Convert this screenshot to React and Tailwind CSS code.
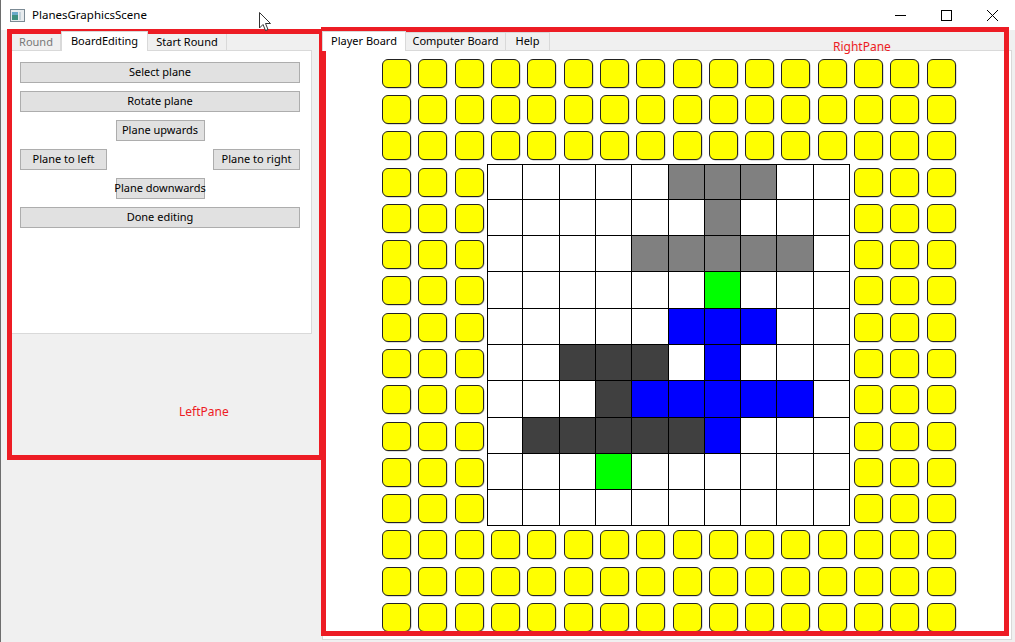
import React from "react";

const BOARD = [
  ".....ggg..",
  "......g...",
  "....ggggg.",
  "......G...",
  ".....bbb..",
  "..ddd.b...",
  "...dbbbbb.",
  ".dddddb...",
  "...G......",
  "..........",
];

const fillFor = {
  ".": "bg-white",
  g: "bg-[#808080]",
  d: "bg-[#404040]",
  b: "bg-[#0000ff]",
  G: "bg-[#00ff00]",
};

function Btn({ text, className = "" }) {
  return (
    <div
      className={`h-[21px] flex items-center justify-center whitespace-nowrap bg-[#e1e1e1] border border-[#adadad] text-[11px] text-black ${className}`}
    >
      {text}
    </div>
  );
}

function Cell({ r, c }) {
  const inBoard = r >= 3 && r <= 12 && c >= 3 && c <= 12;
  if (!inBoard) {
    return (
      <div className="w-[36.3px] h-[36.3px] pl-[4px] pt-[4px]">
        <div className="w-[29px] h-[29px] rounded-[6px] bg-[#ffff00] border-[1.5px] border-[#222222] shadow-[0.5px_0.5px_0_#b8b8b8]" />
      </div>
    );
  }
  const br = r - 3;
  const bc = c - 3;
  const kind = BOARD[br][bc];
  return (
    <div
      className={`w-[36.3px] h-[36.3px] border-r border-b border-black ${
        br === 0 ? "border-t" : ""
      } ${bc === 0 ? "border-l" : ""} ${fillFor[kind]}`}
    />
  );
}

export default function App() {
  const cells = [];
  for (let r = 0; r < 16; r++) {
    for (let c = 0; c < 16; c++) {
      cells.push(<Cell key={`${r}-${c}`} r={r} c={c} />);
    }
  }

  return (
    <div className="relative w-[1015px] h-[642px] overflow-hidden bg-[#f0f0f0] border-l border-[#6d6d6d] font-['Noto_Sans','Liberation_Sans',sans-serif] text-black">
      {/* title bar */}
      <div className="h-[30px] bg-white flex items-center">
        <svg width="15" height="13" viewBox="0 0 15 13" className="ml-[9px]">
          <rect x="0.5" y="0.5" width="14" height="12" fill="#e8ecef" stroke="#7b8a94" />
          <rect x="2" y="3" width="6" height="8" fill="#3e8f7f" />
          <rect x="2" y="3" width="6" height="3" fill="#6aa9c9" />
          <rect x="9" y="3" width="2" height="8" fill="#c7d3da" />
        </svg>
        <span className="ml-[7px] text-[11.5px]">PlanesGraphicsScene</span>
        <div className="ml-auto flex h-full">
          <div className="w-[46px] flex items-center justify-center">
            <svg width="11" height="11" viewBox="0 0 11 11">
              <line x1="0" y1="5.5" x2="11" y2="5.5" stroke="#000" strokeWidth="1" />
            </svg>
          </div>
          <div className="w-[46px] flex items-center justify-center">
            <svg width="11" height="11" viewBox="0 0 11 11">
              <rect x="0.5" y="0.5" width="10" height="10" fill="none" stroke="#000" strokeWidth="1" />
            </svg>
          </div>
          <div className="w-[46px] flex items-center justify-center">
            <svg width="11" height="11" viewBox="0 0 11 11">
              <path d="M0 0 L11 11 M11 0 L0 11" stroke="#000" strokeWidth="1" />
            </svg>
          </div>
        </div>
      </div>

      {/* content */}
      <div className="flex h-[612px]">
        {/* left pane */}
        <div className="w-[321px] pl-[10px] pt-[3px]">
          <div className="flex h-[17px] items-end text-[11px] whitespace-nowrap">
            <div className="h-[17px] w-[50px] flex items-center justify-center bg-[#f0f0f0] border border-b-0 border-[#d9d9d9] text-[#787878]">
              Round
            </div>
            <div className="relative z-10 h-[20px] -mb-[1px] w-[87px] flex items-center justify-center bg-white border border-b-0 border-[#d9d9d9]">
              BoardEditing
            </div>
            <div className="h-[17px] w-[79px] flex items-center justify-center bg-[#f0f0f0] border border-b-0 border-l-0 border-[#d9d9d9]">
              Start Round
            </div>
          </div>
          <div className="w-[301px] h-[284px] bg-white border border-[#d9d9d9] pl-[8px] pr-[11px] pt-[11px] flex flex-col gap-[8px]">
            <Btn text="Select plane" className="w-full" />
            <Btn text="Rotate plane" className="w-full" />
            <Btn text="Plane upwards" className="w-[89px] mx-auto" />
            <div className="flex justify-between">
              <Btn text="Plane to left" className="w-[87px]" />
              <Btn text="Plane to right" className="w-[87px]" />
            </div>
            <Btn text="Plane downwards" className="w-[89px] mx-auto" />
            <Btn text="Done editing" className="w-full" />
          </div>
        </div>

        {/* right pane */}
        <div className="w-[690px] pt-[1px] flex flex-col">
          <div className="flex h-[19px] items-end text-[11px] whitespace-nowrap">
            <div className="relative z-10 h-[20px] -mb-[1px] w-[84px] flex items-center justify-center bg-white border border-b-0 border-[#d9d9d9]">
              Player Board
            </div>
            <div className="h-[18px] w-[100px] flex items-center justify-center bg-[#f0f0f0] border border-b-0 border-l-0 border-[#d9d9d9]">
              Computer Board
            </div>
            <div className="h-[18px] w-[44px] flex items-center justify-center bg-[#f0f0f0] border border-b-0 border-l-0 border-[#d9d9d9]">
              Help
            </div>
          </div>
          <div className="h-[590px] bg-white border border-[#d9d9d9] pl-[3px] flex items-center justify-center">
            <div className="grid grid-cols-[repeat(16,36.3px)] grid-rows-[repeat(16,36.3px)]">
              {cells}
            </div>
          </div>
        </div>
      </div>

      {/* annotations */}
      <div className="absolute left-[6px] top-[29px] w-[317px] h-[431px] border-[5px] border-[#ed1c24] pointer-events-none" />
      <div className="absolute left-[320px] top-[27px] w-[688px] h-[609px] border-[5px] border-[#ed1c24] pointer-events-none" />
      <div className="absolute left-[178px] top-[403px] text-[12px] text-[#ed1c24]">LeftPane</div>
      <div className="absolute left-[832px] top-[38px] text-[12px] text-[#ed1c24]">RightPane</div>

      {/* mouse cursor */}
      <svg className="absolute left-[258px] top-[12px]" width="13" height="20" viewBox="0 0 13 20">
        <path d="M0.5 0.5 L0.5 16 L4 12.5 L6.5 18.5 L9 17.5 L6.5 11.5 L11.5 11.5 Z" fill="#fff" stroke="#333" strokeWidth="1" />
      </svg>
    </div>
  );
}
